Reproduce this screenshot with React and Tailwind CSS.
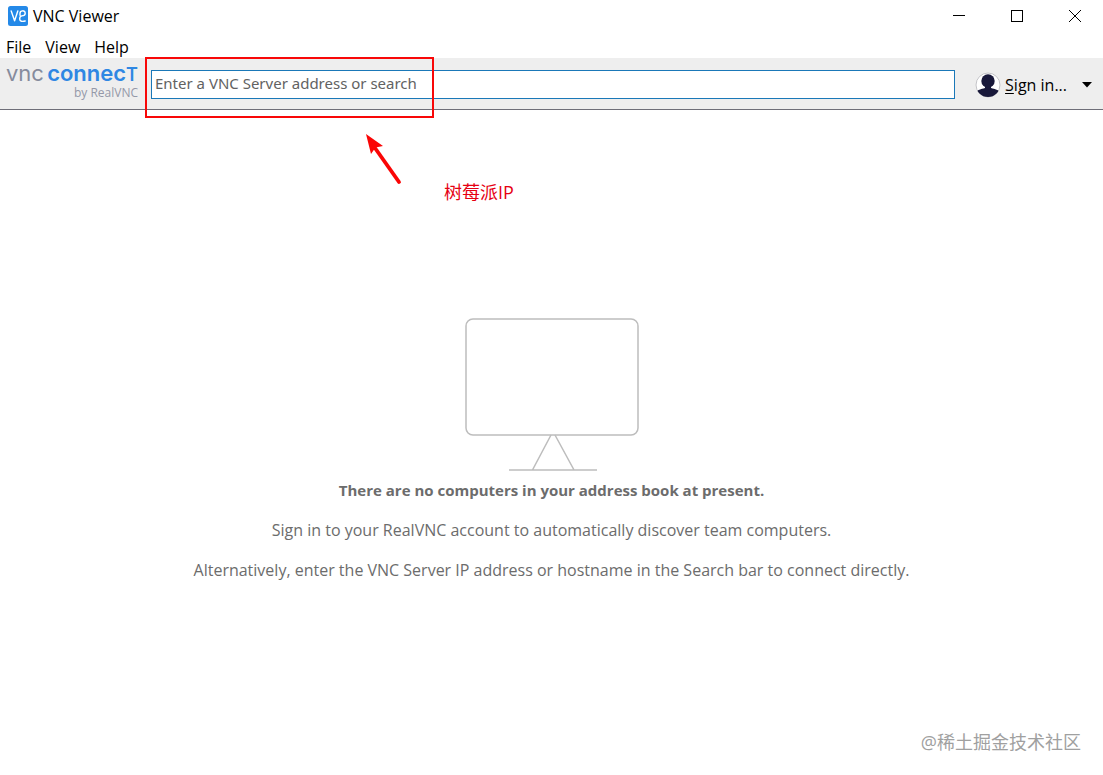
import React from "react";

function WindowButton({ label, children }) {
  return (
    <button type="button" aria-label={label} className="flex h-8 w-[58px] items-center justify-center">
      <svg width="14" height="14" viewBox="0 0 14 14" fill="none" stroke="#000" strokeWidth="1">
        {children}
      </svg>
    </button>
  );
}

function TitleBar() {
  return (
    <header className="flex h-8 items-center pl-2">
      <svg width="20" height="20" viewBox="0 0 20 20" aria-hidden="true">
        <rect width="20" height="20" rx="2.5" fill="#2489e8" />
        <g fill="none" stroke="#fff" strokeWidth="1.4" strokeLinecap="round" strokeLinejoin="round">
          <path d="M3.2 5 6.6 14.8 9.8 5" />
          <path d="M12 9.2V7.4C12 4 17.2 4 17.2 7.2C17.2 9.6 15.4 9.8 13.8 9.9C11.6 10.2 11.7 12 11.7 13C11.7 15.6 14.5 15.8 17.2 15" />
        </g>
      </svg>
      <h1 className="ml-[5px] text-base leading-5">VNC Viewer</h1>
      <div className="-mr-px ml-auto flex">
        <WindowButton label="Minimize">
          <path d="M1 6.5H13" />
        </WindowButton>
        <WindowButton label="Maximize">
          <rect x="1.5" y="1.5" width="11" height="11" />
        </WindowButton>
        <WindowButton label="Close">
          <path d="M1 1 13 13M13 1 1 13" />
        </WindowButton>
      </div>
    </header>
  );
}

function MenuBar() {
  return (
    <nav className="flex h-[26px] items-center gap-3.5 px-1.5 pt-1 text-base leading-5">
      <button type="button">File</button>
      <button type="button">View</button>
      <button type="button">Help</button>
    </nav>
  );
}

function Brand() {
  return (
    <div className="flex w-[132px] shrink-0 flex-col items-end pb-1">
      <div className="flex w-full items-baseline justify-between font-[Inter,sans-serif] text-[22px] leading-5">
        <span className="text-[#858b9d]">vnc</span>
        <span className="font-semibold text-[#2f87e3]">
          connec<span className="text-lg/5">T</span>
        </span>
      </div>
      <span className="text-xs leading-4 text-[#9498a8]">by RealVNC</span>
    </div>
  );
}

function Toolbar() {
  return (
    <div className="relative flex h-[52px] items-center border-b border-[#6e6e78] bg-[#eeeeee] pl-1.5 pr-[11px]">
      <Brand />
      <input
        type="text"
        aria-label="VNC Server address or search"
        placeholder="Enter a VNC Server address or search"
        className="ml-[13px] mt-0.5 h-[29px] min-w-0 flex-1 border border-[#1a78b8] bg-white px-[3px] pb-1 font-['Noto_Sans',sans-serif] text-[15px] outline-none placeholder:text-[#626262]"
      />
      <button type="button" className="ml-5 mt-0.5 flex items-center text-base leading-5">
        <svg width="26" height="26" viewBox="0 0 26 26" aria-hidden="true">
          <defs>
            <clipPath id="avatar">
              <circle cx="13" cy="13" r="12" />
            </clipPath>
          </defs>
          <circle cx="13" cy="13" r="12" fill="#fff" stroke="#c4c4c8" />
          <g fill="#18183a" clipPath="url(#avatar)">
            <circle cx="13" cy="9" r="6.7" />
            <path d="M10 13H16V16C20 17 24 18 24 20V26H2V20C2 18 6 17 10 16Z" />
          </g>
        </svg>
        <span className="ml-1">
          <u className="underline-offset-2">S</u>ign in...
        </span>
        <svg className="ml-[15px]" width="10" height="6" viewBox="0 0 10 6" aria-hidden="true">
          <path d="M0 0H10L5 5.5Z" fill="#000" />
        </svg>
      </button>
      <div className="pointer-events-none absolute left-[145px] top-[-1px] h-[61px] w-[289px] border-2 border-[#f80808]" />
    </div>
  );
}

function Annotation() {
  return (
    <div className="absolute left-[365px] top-6 flex items-end text-[#e60012]">
      <svg width="38" height="52" viewBox="0 0 38 52" className="mb-[18px]" aria-hidden="true">
        <path d="M10 14 34 48" fill="none" stroke="#fa0505" strokeWidth="3.8" strokeLinecap="round" />
        <path d="M1 0 18 12 10.5 13.5 6 20Z" fill="#fa0505" />
      </svg>
      <p className="ml-[41px] text-lg leading-6">树莓派IP</p>
    </div>
  );
}

function EmptyState() {
  return (
    <section className="flex flex-col items-center pt-[207px] text-center text-base leading-5 text-[#6c6c6c]">
      <svg width="176" height="156" viewBox="0 0 176 156" fill="none" stroke="#bdbdbd" strokeWidth="1.5" aria-hidden="true">
        <rect x="2" y="2" width="172" height="116" rx="7" />
        <path d="M87 118 68.5 153H110L91 118M45 153H133" />
      </svg>
      <h2 className="mt-[7px] text-[15px] font-bold leading-5">There are no computers in your address book at present.</h2>
      <p className="mt-5">Sign in to your RealVNC account to automatically discover team computers.</p>
      <p className="mt-5">
        Alternatively, enter the VNC Server IP address or hostname in the Search bar to connect directly.
      </p>
    </section>
  );
}

export default function App() {
  return (
    <div className="flex min-h-screen flex-col bg-white font-['Open_Sans','Noto_Sans_CJK_SC',sans-serif] text-black">
      <TitleBar />
      <MenuBar />
      <Toolbar />
      <main className="relative flex flex-1 flex-col justify-between">
        <EmptyState />
        <Annotation />
        <footer className="self-end pb-[21px] pr-[22px] text-lg leading-6 text-[#a0a0a0]">@稀土掘金技术社区</footer>
      </main>
    </div>
  );
}
